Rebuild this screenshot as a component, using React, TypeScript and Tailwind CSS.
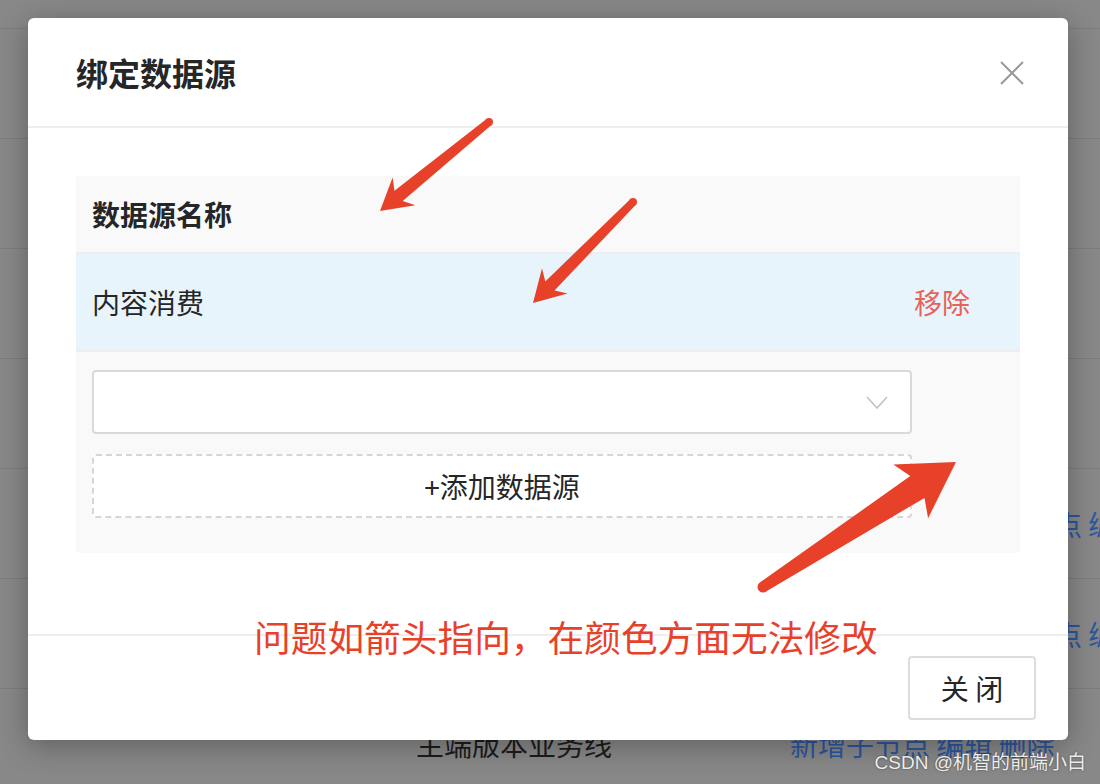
import React from "react";

type P = [number, number];

function arrowPoints(
  tail: P,
  tip: P,
  headLen: number,
  headHalf: number,
  notchAlong: number,
  notchHalf: number,
  tailHalf: number
) {
  const dx = tail[0] - tip[0];
  const dy = tail[1] - tip[1];
  const len = Math.hypot(dx, dy);
  const ux = dx / len;
  const uy = dy / len;
  const nx = -uy;
  const ny = ux;
  const pt = (a: number, n: number, base: P = tip) =>
    `${(base[0] + ux * a + nx * n).toFixed(1)},${(base[1] + uy * a + ny * n).toFixed(1)}`;
  return [
    pt(0, 0),
    pt(headLen, headHalf),
    pt(notchAlong, notchHalf),
    pt(0, tailHalf, tail),
    pt(0, -tailHalf, tail),
    pt(notchAlong, -notchHalf),
    pt(headLen, -headHalf),
  ].join(" ");
}

const arrows: { tail: P; tip: P; hl: number; hh: number; na: number; nh: number; th: number }[] = [
  { tail: [489, 122], tip: [380, 211], hl: 31, hh: 18, na: 24, nh: 6.5, th: 4 },
  { tail: [633, 202], tip: [533, 303], hl: 31, hh: 18, na: 24, nh: 6.5, th: 4 },
  { tail: [763, 587], tip: [956, 462], hl: 54, hh: 32, na: 46, nh: 13, th: 5.5 },
];

const cjk = "font-['Noto_Sans_CJK_SC',sans-serif]";

function BgRow({ name, actions, shift }: { name?: string; actions?: string; shift?: boolean }) {
  return (
    <div className="h-[110px] border-b border-[#7d7d7d] flex items-center shrink-0">
      <div className="w-[416px] shrink-0" />
      <div className="w-[374px] shrink-0 text-[28px] text-[#1c1c1c] whitespace-nowrap">{name}</div>
      <div className={`text-[28px] text-[#2b55a0] whitespace-pre ${shift ? "pl-[152px]" : ""}`}>{actions}</div>
    </div>
  );
}

export default function App() {
  return (
    <div className={`relative w-[1100px] h-[784px] overflow-hidden bg-[#888888] ${cjk}`}>
      {/* dimmed background page */}
      <div className="flex flex-col">
        <div className="h-[29px] border-b border-[#7d7d7d] shrink-0" />
        <BgRow />
        <BgRow />
        <BgRow />
        <BgRow />
        <BgRow name="内容消费" actions="新增子节点 编辑 删除" shift />
        <BgRow name="内容消费" actions="新增子节点 编辑 删除" shift />
        <BgRow name="主端版本业务线" actions="新增子节点 编辑 删除" />
      </div>

      {/* modal */}
      <div className="absolute inset-0 pl-[28px] pt-[18px]">
        <div className="w-[1040px] h-[722px] bg-white rounded-[6px] shadow-[0_6px_30px_rgba(0,0,0,0.3)] flex flex-col">
          <div className="h-[110px] shrink-0 flex items-center justify-between pl-[48px] pr-[44px] border-b-2 border-[#eeeeee]">
            <div className="text-[32px] font-semibold text-[#262626] leading-none">绑定数据源</div>
            <svg width="24" height="24" viewBox="0 0 24 24" className="mt-[2px]">
              <path d="M1 1 L23 23 M23 1 L1 23" stroke="#9a9a9a" strokeWidth="2" fill="none" />
            </svg>
          </div>

          <div className="flex-1 px-[48px] pt-[48px]">
            <div className="bg-[#f9f9f9] rounded-[4px] flex flex-col">
              <div className="h-[78px] flex items-center pl-[16px] border-b-2 border-[#eeeeee]">
                <span className="text-[28px] font-semibold text-[#262626] leading-none">数据源名称</span>
              </div>
              <div className="h-[98px] flex items-center justify-between pl-[16px] pr-[50px] bg-[#e8f4fc] border-b-2 border-[#eeeeee]">
                <span className="text-[28px] text-[#262626] leading-none">内容消费</span>
                <span className="text-[28px] text-[#e96158] leading-none">移除</span>
              </div>
              <div className="pl-[16px] pt-[18px] pb-[35px] flex flex-col gap-[20px]">
                <div className="w-[820px] h-[64px] bg-white border-2 border-[#d9d9d9] rounded-[4px] flex items-center justify-end pr-[22px]">
                  <svg width="22" height="13" viewBox="0 0 22 13">
                    <polyline points="1,1 11,12 21,1" stroke="#c2c2c2" strokeWidth="1.6" fill="none" />
                  </svg>
                </div>
                <div className="w-[820px] h-[64px] bg-white border-2 border-dashed border-[#d6d6d6] rounded-[4px] flex items-center justify-center">
                  <span className="text-[28px] text-[#262626] leading-none">+添加数据源</span>
                </div>
              </div>
            </div>
          </div>

          <div className="h-[106px] shrink-0 border-t-2 border-[#eeeeee] flex items-center justify-end pr-[32px]">
            <div className="w-[128px] h-[64px] border-2 border-[#dddddd] rounded-[4px] bg-white flex items-center justify-center">
              <span className="text-[28px] text-[#262626] leading-none whitespace-pre">关 闭</span>
            </div>
          </div>
        </div>
      </div>

      {/* annotation arrows */}
      <svg className="absolute left-0 top-0 pointer-events-none" width="1100" height="784" viewBox="0 0 1100 784">
        {arrows.map((a, i) => (
          <g key={i} fill="#e8412a">
            <polygon points={arrowPoints(a.tail, a.tip, a.hl, a.hh, a.na, a.nh, a.th)} />
            <circle cx={a.tail[0]} cy={a.tail[1]} r={a.th} />
          </g>
        ))}
      </svg>

      {/* annotation text */}
      <div className="absolute left-[254px] top-[618px] text-[36.7px] leading-none text-[#e8412a] whitespace-nowrap">
        问题如箭头指向，在颜色方面无法修改
      </div>

      {/* watermark */}
      <div className="absolute right-[14px] top-[753px] text-[19px] leading-none text-[#ececec] whitespace-nowrap font-['Liberation_Sans','Noto_Sans_CJK_SC',sans-serif] [text-shadow:0_0_2px_rgba(0,0,0,0.55)]">
        CSDN @机智的前端小白
      </div>
    </div>
  );
}
